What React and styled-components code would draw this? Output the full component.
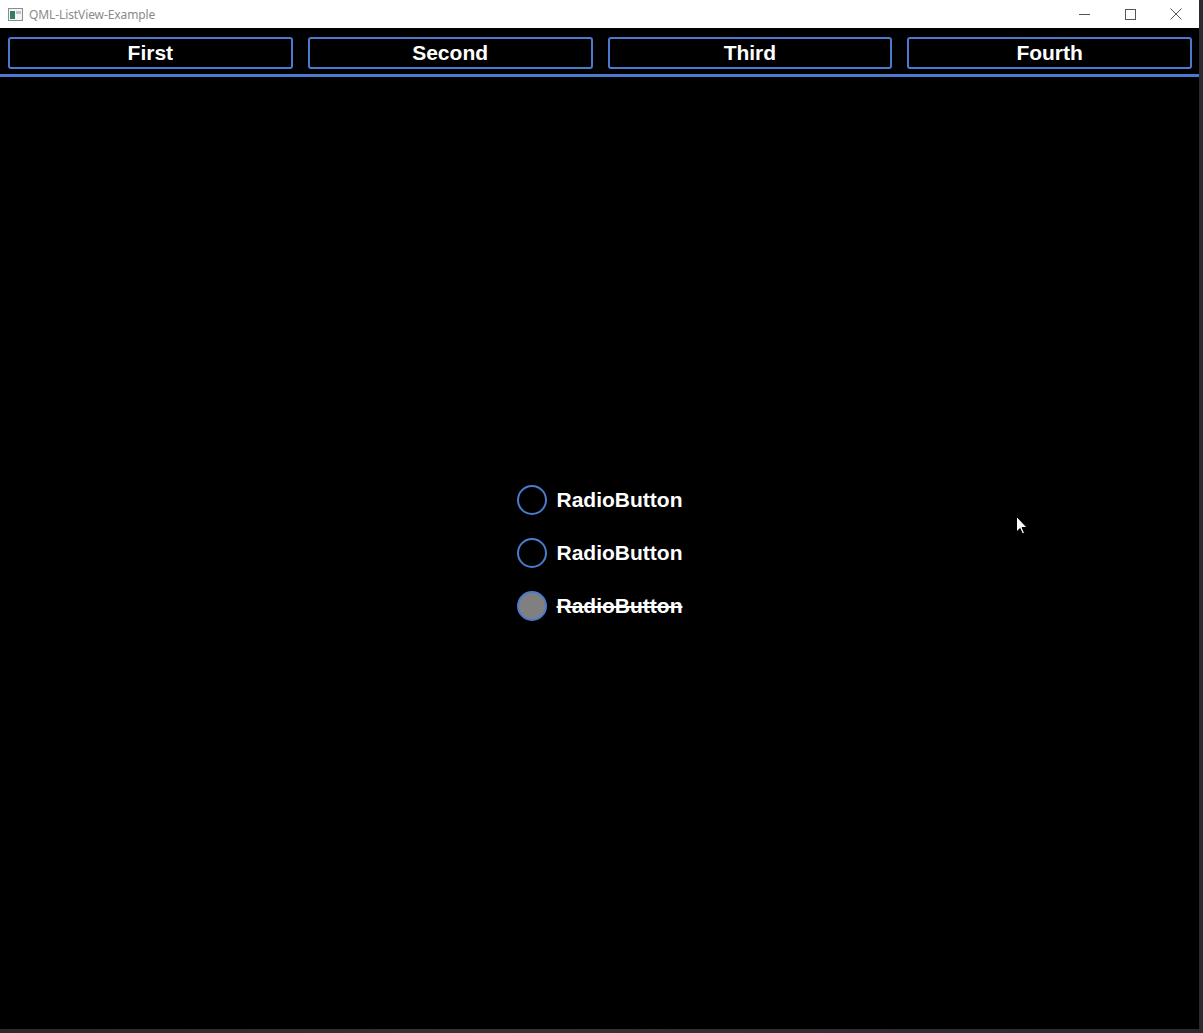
import React, { useState } from 'react';
import styled, { createGlobalStyle } from 'styled-components';

const GlobalStyle = createGlobalStyle`
  html, body {
    margin: 0;
    padding: 0;
    background: #2b2427;
  }
  #root {
    width: 1203px;
    height: 1033px;
  }
`;

const accent = '#4a7bcf';

const Desktop = styled.div`
  position: relative;
  width: 1203px;
  height: 1033px;
  background: linear-gradient(90deg, #2f272a 0%, #3b3035 40%, #2a2a33 100%);
  overflow: hidden;
`;

const Window = styled.div`
  display: flex;
  flex-direction: column;
  width: 1199px;
  height: 1029px;
  background: #000;
`;

const TitleBar = styled.div`
  display: flex;
  align-items: center;
  height: 28px;
  background: #fff;
  font-family: "Noto Sans", "Liberation Sans", sans-serif;
  font-size: 12px;
  color: #8a8a8a;
`;

const AppIcon = styled.svg`
  margin: 0 6px 0 8px;
`;

const Title = styled.span`
  flex: 1;
  letter-spacing: -0.1px;
`;

const Controls = styled.div`
  display: flex;
  height: 100%;
`;

const ControlButton = styled.div`
  display: flex;
  align-items: center;
  justify-content: center;
  width: 46px;
  height: 100%;
`;

const TabBar = styled.div`
  display: flex;
  padding-top: 9px;
`;

const TabCell = styled.div`
  flex: 1;
  padding: 0 7px 0 8px;
`;

const Tab = styled.button`
  box-sizing: border-box;
  width: 100%;
  height: 32px;
  padding: 0;
  background: #000;
  border: 2px solid ${accent};
  border-radius: 3px;
  color: #fff;
  font-family: "Liberation Sans", Arial, sans-serif;
  font-weight: bold;
  font-size: 21px;
  line-height: 28px;
  cursor: pointer;
`;

const Divider = styled.div`
  height: 3px;
  margin-top: 5px;
  background: ${accent};
`;

const Content = styled.div`
  flex: 1;
  display: flex;
  align-items: center;
  justify-content: center;
`;

const RadioGroup = styled.div`
  display: flex;
  flex-direction: column;
  gap: 23px;
`;

const RadioRow = styled.label`
  display: flex;
  align-items: center;
  gap: 10px;
  height: 30px;
  cursor: pointer;
`;

const Indicator = styled.span`
  box-sizing: border-box;
  width: 30px;
  height: 30px;
  border-radius: 50%;
  border: 2px solid ${accent};
  background: ${p => (p.$checked ? '#808080' : 'transparent')};
`;

const RadioLabel = styled.span`
  color: #fff;
  font-family: "Liberation Sans", Arial, sans-serif;
  font-weight: bold;
  font-size: 21px;
  text-decoration: ${p => (p.$checked ? 'line-through' : 'none')};
  text-decoration-thickness: 2px;
`;

const Cursor = styled.svg`
  position: absolute;
  left: 1016px;
  top: 516px;
`;

const tabs = ['First', 'Second', 'Third', 'Fourth'];

export default function App() {
  const [selected, setSelected] = useState(2);

  return (
    <>
      <GlobalStyle />
      <Desktop>
        <Window>
          <TitleBar>
            <AppIcon width="15" height="13" viewBox="0 0 15 13">
              <rect x="0.5" y="0.5" width="14" height="12" fill="#f4f4f4" stroke="#8c8c8c" />
              <rect x="2" y="3" width="5" height="8" fill="#2f7d6a" />
              <rect x="8" y="3" width="5" height="3" fill="#b9c4cc" />
            </AppIcon>
            <Title>QML-ListView-Example</Title>
            <Controls>
              <ControlButton>
                <svg width="11" height="11" viewBox="0 0 11 11">
                  <line x1="0" y1="5.5" x2="11" y2="5.5" stroke="#555" strokeWidth="1" />
                </svg>
              </ControlButton>
              <ControlButton>
                <svg width="11" height="11" viewBox="0 0 11 11">
                  <rect x="0.5" y="0.5" width="10" height="10" fill="none" stroke="#555" strokeWidth="1" />
                </svg>
              </ControlButton>
              <ControlButton>
                <svg width="12" height="12" viewBox="0 0 12 12">
                  <path d="M0.5 0.5 L11.5 11.5 M11.5 0.5 L0.5 11.5" stroke="#555" strokeWidth="1" />
                </svg>
              </ControlButton>
            </Controls>
          </TitleBar>

          <TabBar>
            {tabs.map(t => (
              <TabCell key={t}>
                <Tab>{t}</Tab>
              </TabCell>
            ))}
          </TabBar>
          <Divider />

          <Content>
            <RadioGroup>
              {[0, 1, 2].map(i => (
                <RadioRow key={i} onClick={() => setSelected(i)}>
                  <Indicator $checked={selected === i} />
                  <RadioLabel $checked={selected === i}>RadioButton</RadioLabel>
                </RadioRow>
              ))}
            </RadioGroup>
          </Content>
        </Window>

        <Cursor width="12" height="19" viewBox="0 0 12 19">
          <path d="M0.5 0.5 L0.5 16 L4 12.5 L6.5 18 L8.5 17 L6 11.5 L11 11.5 Z" fill="#fff" stroke="#000" strokeWidth="1" />
        </Cursor>
      </Desktop>
    </>
  );
}
